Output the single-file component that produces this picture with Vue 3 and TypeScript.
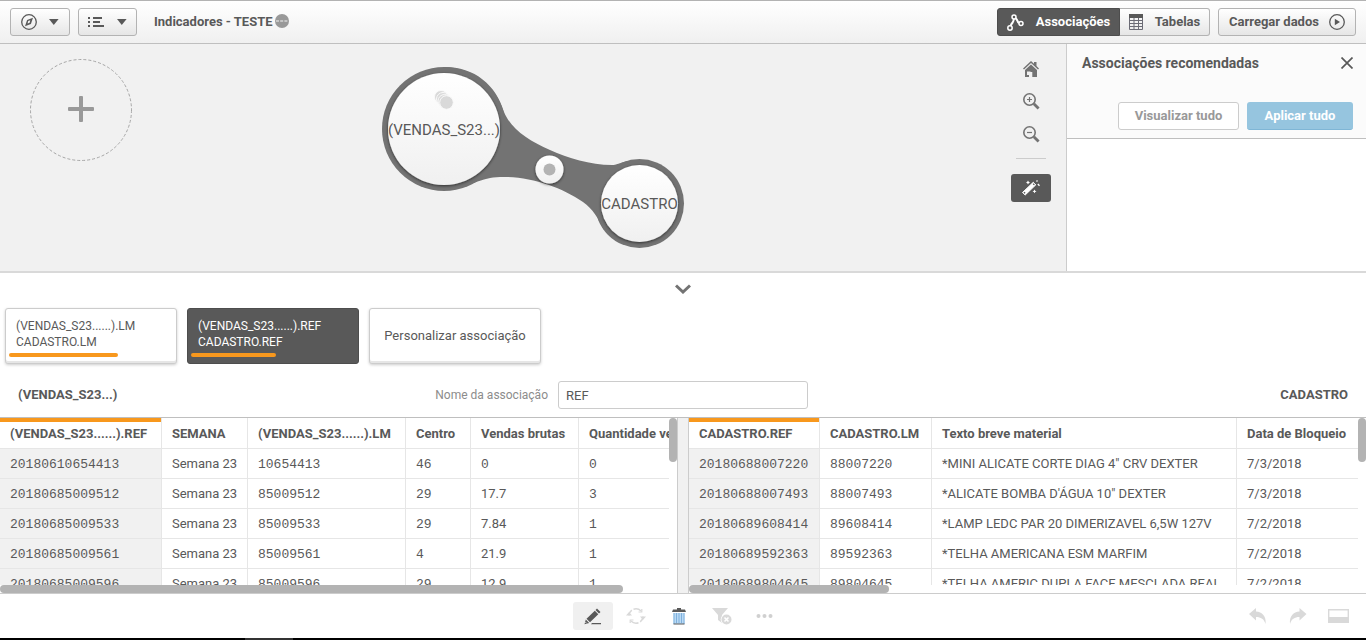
<script setup lang="ts">
import { ref } from 'vue'

interface Column { title: string; width: number }
interface Pane { id: string; columns: Column[]; rows: string[][]; thumb: number }
interface Association { left: string; right: string; score: number; active: boolean }

const associationName = ref('REF')

const associations: Association[] = [
  { left: '(VENDAS_S23......).LM', right: 'CADASTRO.LM', score: 64, active: false },
  { left: '(VENDAS_S23......).REF', right: 'CADASTRO.REF', score: 50, active: true },
]

const panes: Pane[] = [
  {
    id: 'vendas',
    thumb: 92,
    columns: [
      { title: '(VENDAS_S23......).REF', width: 162 },
      { title: 'SEMANA', width: 86 },
      { title: '(VENDAS_S23......).LM', width: 158 },
      { title: 'Centro', width: 65 },
      { title: 'Vendas brutas', width: 108 },
      { title: 'Quantidade vendida', width: 150 },
    ],
    rows: [
      ['20180610654413', 'Semana 23', '10654413', '46', '0', '0'],
      ['20180685009512', 'Semana 23', '85009512', '29', '17.7', '3'],
      ['20180685009533', 'Semana 23', '85009533', '29', '7.84', '1'],
      ['20180685009561', 'Semana 23', '85009561', '4', '21.9', '1'],
      ['20180685009596', 'Semana 23', '85009596', '29', '12.9', '1'],
    ],
  },
  {
    id: 'cadastro',
    thumb: 29.5,
    columns: [
      { title: 'CADASTRO.REF', width: 131 },
      { title: 'CADASTRO.LM', width: 112 },
      { title: 'Texto breve material', width: 305 },
      { title: 'Data de Bloqueio', width: 160 },
    ],
    rows: [
      ['20180688007220', '88007220', '*MINI ALICATE CORTE DIAG 4" CRV DEXTER', '7/3/2018'],
      ['20180688007493', '88007493', "*ALICATE BOMBA D'ÁGUA 10\" DEXTER", '7/3/2018'],
      ['20180689608414', '89608414', '*LAMP LEDC PAR 20 DIMERIZAVEL 6,5W 127V', '7/2/2018'],
      ['20180689592363', '89592363', '*TELHA AMERICANA ESM MARFIM', '7/2/2018'],
      ['20180689804645', '89804645', '*TELHA AMERIC DUPLA FACE MESCLADA REAL', '7/2/2018'],
    ],
  },
]

const tableWidth = (pane: Pane): number => pane.columns.reduce((sum, c) => sum + c.width, 0)
const isCode = (value: string): boolean => /^\d+$/.test(value)
</script>

<template>
  <div class="app">
    <header class="topbar">
      <button class="btn menu" aria-label="Navegação">
        <svg width="16" height="16" viewBox="0 0 16 16" fill="none">
          <circle cx="8" cy="8" r="7.3" stroke="#595959" stroke-width="1.3" />
          <path d="M12 3.800 9.900 9.900 4 12.200 6.100 6.100Z" fill="#595959" />
          <path d="M7.200 7 9.300 6.200 8.600 8.800 6.600 9.600Z" fill="#f4f4f4" />
        </svg>
        <svg width="10" height="6" viewBox="0 0 10 6"><path d="M0 0H9.6L4.8 6Z" fill="#595959" /></svg>
      </button>
      <button class="btn menu list" aria-label="Menu">
        <svg width="17" height="12" viewBox="0 0 17 12" fill="#595959">
          <path d="M0 1h2v2H0zM5 1h9v2H5zM0 5h2v2H0zM5 5h7v2H5zM0 9h2v2H0zM5 9h11v2H5z" />
        </svg>
        <svg width="10" height="6" viewBox="0 0 10 6"><path d="M0 0H9.6L4.8 6Z" fill="#595959" /></svg>
      </button>
      <h1 class="title">Indicadores - TESTE</h1>
      <svg class="status" width="14" height="14" viewBox="0 0 14 14">
        <circle cx="7" cy="7" r="7" fill="#999" />
        <path d="M1 7H13" stroke="#f4f4f4" stroke-width="1.2" stroke-dasharray="3 1.2" />
      </svg>
      <div class="switch">
        <button class="btn on">
          <svg width="17" height="17" viewBox="0 0 17 17" fill="none" stroke="#fff" stroke-width="1.5">
            <circle cx="7" cy="3" r="2" /><circle cx="3" cy="14" r="2.2" /><circle cx="14" cy="9.5" r="2" />
            <path d="M6.8 5C6.6 9 5.3 7.8 3.6 11.8M8.6 4.2C11 6 10 8 12 9" stroke-width="2" />
          </svg>
          Associações
        </button>
        <button class="btn off">
          <svg width="14" height="16" viewBox="0 0 14 16" fill="none">
            <path d="M.5.5h13v15H.5zM5 4v11.5M9.500 4v11.5M.5 6.500h13M.5 9.500h13M.5 12.500h13" stroke="#6b6b75" />
            <path d="M0 0h14v4H0z" fill="#595959" />
          </svg>
          Tabelas
        </button>
      </div>
      <button class="btn load">
        Carregar dados
        <svg width="16" height="16" viewBox="0 0 16 16" fill="none">
          <circle cx="8" cy="8" r="7.3" stroke="#595959" stroke-width="1.3" />
          <path d="M5.8 4.8 11 8 5.8 11.2Z" fill="#595959" />
        </svg>
      </button>
    </header>

    <section class="upper">
      <div class="canvas">
        <button class="add" aria-label="Adicionar dados">
          <svg width="102" height="102" viewBox="0 0 102 102" fill="none">
            <circle cx="51" cy="51" r="50.5" stroke="#a6a6a6" stroke-dasharray="3 2" />
            <rect x="38" y="48" width="26" height="4" rx="1" fill="#999" />
            <rect x="49" y="37" width="4" height="26" rx="1" fill="#999" />
          </svg>
        </button>
        <svg class="graph" width="320" height="190" viewBox="374 60 320 190">
          <defs>
            <linearGradient id="bubble" x1="0" y1="0" x2="0" y2="1">
              <stop offset="0" stop-color="#fff" /><stop offset="1" stop-color="#f0f0f0" />
            </linearGradient>
            <filter id="drop" x="-20%" y="-20%" width="140%" height="140%">
              <feDropShadow dx="0" dy="1" stdDeviation="1.5" flood-color="#000" flood-opacity="0.6" />
            </filter>
          </defs>
          <g fill="#737373">
            <circle cx="444" cy="129" r="62" />
            <circle cx="639.5" cy="203.5" r="44.5" />
            <path d="M444 67C475 67 496 85 504 112C511 129 529 141 550 150C568 158 590 165 612 165C616 165 620 163 627 161L639 203L604 230C598 218 593 209 583 202C561 187 530 176 500 177C490 177.500 484 179 474 183L444 129Z" />
          </g>
          <g fill="url(#bubble)" filter="url(#drop)">
            <circle cx="444" cy="129" r="56" />
            <circle cx="639.500" cy="203.500" r="38.500" />
            <circle cx="549.500" cy="169.500" r="14" />
          </g>
          <circle cx="549.500" cy="169.500" r="6" fill="#b3b3b3" />
          <g fill="#d9d9d9" stroke="#fafafa">
            <circle cx="441" cy="97" r="6.500" /><circle cx="443" cy="99" r="6.500" />
            <circle cx="444.500" cy="101" r="6.500" /><circle cx="446.500" cy="102.500" r="6.800" />
          </g>
          <g class="node-label">
            <text x="444" y="135">(VENDAS_S23...)</text>
            <text x="639.500" y="209">CADASTRO</text>
          </g>
        </svg>
        <nav class="tools">
          <button aria-label="Início">
            <svg width="16" height="16" viewBox="0 0 16 16" fill="#737373">
              <path d="M8 0 11 2.800V1h2.500v4L16 7.500l-1 1L8 2 1 8.500l-1-1Z" />
              <path d="M8 3.600 14 9v7H9.300v-5H6v5H2V9Z" /><path d="M4 10.500h3.500V14H4z" fill="#f1f1f1" />
            </svg>
          </button>
          <button aria-label="Ampliar">
            <svg width="17" height="17" viewBox="0 0 17 17" fill="none" stroke="#737373">
              <circle cx="6.500" cy="6.500" r="5.700" stroke-width="1.600" /><path d="M10.800 10.800 15.600 15.600" stroke-width="2.800" />
              <path d="M4 6.500h5M6.500 4v5" stroke-width="1.200" />
            </svg>
          </button>
          <button aria-label="Reduzir">
            <svg width="17" height="17" viewBox="0 0 17 17" fill="none" stroke="#737373">
              <circle cx="6.500" cy="6.500" r="5.700" stroke-width="1.600" /><path d="M10.800 10.800 15.600 15.600" stroke-width="2.800" />
              <path d="M4 6.500h5" stroke-width="1.200" />
            </svg>
          </button>
          <hr />
          <button class="wand" aria-label="Associações recomendadas">
            <svg width="20" height="16" viewBox="0 0 20 16" fill="#fff">
              <path d="M1.500 12.500 12.300 2.300 14.800 4.800 4.200 15Z" stroke="#fff" stroke-width="1" stroke-linejoin="round" />
              <path d="M3 13.200l1-1M12.300 4.800l1-1" stroke="#595959" stroke-width="1.600" />
              <path d="M7 .5l.7 1.300L9 2.500l-1.300.7L7 4.500l-.7-1.300L5 2.500l1.300-.7ZM13.500 9.500l.7 1.200 1.300.7-1.300.7-.7 1.200-.7-1.200-1.300-.7 1.300-.7Z" />
              <path d="M15.500 1.500 16.500.5M16.800 4l1.700 1.700" stroke="#fff" stroke-width="1.300" />
            </svg>
          </button>
        </nav>
      </div>
      <aside class="panel">
        <div class="panel-head">
          <div class="panel-title">
            <h2>Associações recomendadas</h2>
            <button class="close" aria-label="Fechar">
              <svg width="12" height="12" viewBox="0 0 12 12"><path d="M.5.5l11 11M11.500.5l-11 11" stroke="#595959" stroke-width="1.700" /></svg>
            </button>
          </div>
          <div class="panel-actions">
            <button class="preview" disabled>Visualizar tudo</button>
            <button class="apply" disabled>Aplicar tudo</button>
          </div>
        </div>
      </aside>
    </section>

    <button class="collapse" aria-label="Recolher">
      <svg width="16" height="10" viewBox="0 0 16 10" fill="none"><path d="M1 1.500 8 8 15 1.500" stroke="#737373" stroke-width="3" /></svg>
    </button>

    <div class="cards">
      <button v-for="a in associations" :key="a.right" class="card" :class="{ active: a.active }">
        <span>{{ a.left }}</span>
        <span>{{ a.right }}</span>
        <i class="score" :style="{ width: a.score + '%' }"></i>
      </button>
      <button class="card custom">Personalizar associação</button>
    </div>

    <div class="naming">
      <div class="naming-side">
        <strong>(VENDAS_S23...)</strong>
        <label for="association-name">Nome da associação</label>
      </div>
      <input id="association-name" v-model="associationName" type="text" />
      <strong class="right">CADASTRO</strong>
    </div>

    <main class="preview-grid">
      <section v-for="pane in panes" :key="pane.id" class="pane">
        <div class="viewport">
          <table :style="{ width: tableWidth(pane) + 'px' }">
            <colgroup><col v-for="c in pane.columns" :key="c.title" :style="{ width: c.width + 'px' }" /></colgroup>
            <thead>
              <tr><th v-for="c in pane.columns" :key="c.title" scope="col">{{ c.title }}</th></tr>
            </thead>
            <tbody>
              <tr v-for="row in pane.rows" :key="row[0]">
                <td v-for="(cell, i) in row" :key="i" :class="{ code: isCode(cell) }">{{ cell }}</td>
              </tr>
            </tbody>
          </table>
        </div>
        <div class="vbar"><i></i></div>
        <div class="hbar"><i :style="{ width: pane.thumb + '%' }"></i></div>
      </section>
    </main>

    <footer class="actions">
      <div class="side"></div>
      <div class="middle">
        <button class="selected" aria-label="Editar">
          <svg width="18" height="17" viewBox="0 0 18 17" fill="#595959">
            <path d="M13 .5 16.500 4 15 5.500 11.500 2ZM10.800 2.800 14.300 6.200 6 14.200 2.500 10.800ZM1.800 11.600 5.200 15 .5 16.300Z" /><path d="M8 15h9v1.300H7z" />
            <path d="M1.500 14.200l1 1" stroke="#f0f0f0" />
          </svg>
        </button>
        <button aria-label="Atualizar" disabled>
          <svg width="20" height="18" viewBox="0 0 20 18" fill="none" stroke="#d9d9d9" stroke-width="1.500">
            <path d="M3 8.500A7 7 0 0 1 5.800 3.200M7.500 2.200A7.200 7.200 0 0 1 15 4M17 9.500A7 7 0 0 1 14.200 14.800M12.500 15.800A7.200 7.200 0 0 1 5 14" />
            <path d="M0 8.500h6L3 5ZM14 9.500h6L17 13Z" fill="#d9d9d9" stroke="none" />
            <path d="M15.800 5.500V2M15.800 5H12.500M4.200 12.500V16M4.200 13H7.500" stroke-width="1.200" />
          </svg>
        </button>
        <button aria-label="Excluir">
          <svg width="14" height="17" viewBox="0 0 14 17">
            <path d="M5 0h4v1.500h4L14 4H0L1 1.500h4Z" fill="#595959" />
            <path d="M1.500 5h11v11h-11z" fill="#b9daf5" /><path d="M2 5v11M4.500 5v10M7 5v10M9.500 5v10M12 5v11" stroke="#7fb0dc" />
            <path d="M1.500 16h11" stroke="#595959" />
          </svg>
        </button>
        <button aria-label="Limpar filtro" disabled>
          <svg width="20" height="17" viewBox="0 0 20 17">
            <path d="M0 0H16L10 7V15L6 12V7Z" fill="#d9d9d9" /><circle cx="14.500" cy="11.500" r="5.800" fill="#fff" />
            <circle cx="14.500" cy="11.500" r="5" fill="#d9d9d9" /><path d="M12.500 9.500l4 4M16.500 9.500l-4 4" stroke="#fff" stroke-width="1.600" />
          </svg>
        </button>
        <button aria-label="Mais" disabled>
          <svg width="18" height="4" viewBox="0 0 18 4" fill="#d0d0d0"><circle cx="2.500" cy="2" r="2" /><circle cx="8.500" cy="2" r="2" /><circle cx="14.500" cy="2" r="2" /></svg>
        </button>
      </div>
      <div class="side end">
        <button aria-label="Desfazer" disabled>
          <svg width="18" height="17" viewBox="0 0 18 17" fill="#d9d9d9"><path d="M0 6 7 0V3.500C13 4 17.500 8 16.500 16C15 11 12 9 7 9V12.500Z" /></svg>
        </button>
        <button aria-label="Refazer" disabled>
          <svg width="18" height="17" viewBox="0 0 18 17" fill="#d9d9d9"><path d="M17.500 6 10.500 0V3.500C4.500 4 0 8 1 16C2.500 11 5.500 9 10.500 9V12.500Z" /></svg>
        </button>
        <button aria-label="Painel">
          <svg width="21" height="14" viewBox="0 0 21 14" fill="none"><path d="M.7.7h19.600v12.600H.7z" stroke="#d9d9d9" stroke-width="1.400" /><path d="M0 8h21v6H0z" fill="#d9d9d9" /></svg>
        </button>
      </div>
    </footer>
    <div class="taskbar"><i></i></div>
  </div>
</template>

<style>
body { margin: 0; }
</style>

<style scoped>
* { box-sizing: border-box; }
.app {
  display: flex;
  flex-direction: column;
  height: 100vh;
  background: #fff;
  color: #595959;
  font: 13px/16px Roboto, "Liberation Sans", sans-serif;
}
button {
  padding: 0;
  border: 0;
  background: none;
  color: inherit;
  font: inherit;
  display: flex;
  align-items: center;
  justify-content: center;
}
svg { flex: none; display: block; }

.topbar {
  flex: none;
  display: flex;
  align-items: center;
  height: 44px;
  padding: 0 10px;
  border-top: 1px solid #b3b3b3;
  border-bottom: 1px solid #bfbfbf;
  background: linear-gradient(#fff, #f0f0f0);
}
.btn {
  height: 28px;
  border: 1px solid #b3b3b3;
  border-radius: 3px;
  background: linear-gradient(#fff, #e6e6e6);
  font-weight: 700;
}
.menu { gap: 12px; width: 60px; margin-right: 8px; }
.list { width: 59px; }
.title { margin: 0 2px 0 9px; font-size: 13px; font-weight: 700; }
.status { margin-bottom: 2px; }
.switch { display: flex; margin-left: auto; }
.on { width: 123px; gap: 12px; border-color: #4d4d4d; border-radius: 3px 0 0 3px; background: #595959; color: #fff; }
.off { width: 90px; gap: 12px; border-left: 0; border-radius: 0 3px 3px 0; }
.load { width: 138px; margin-left: 8px; gap: 10px; }

.upper { flex: none; display: flex; height: 229px; border-bottom: 2px solid #d9d9d9; }
.canvas { position: relative; flex: 1; background: #f1f1f1; overflow: hidden; }
.add { position: absolute; left: 30px; top: 15px; border-radius: 50%; }
.graph { position: absolute; left: 374px; top: 16px; }
.node-label { fill: #595959; font-size: 15px; text-anchor: middle; }
.tools { position: absolute; right: 15px; top: 8px; width: 40px; }
.tools button { width: 40px; height: 33px; }
.tools hr { width: 30px; height: 1px; margin: 7px auto 15px; border: 0; background: #ccc; }
.tools .wand { height: 28px; border-radius: 3px; background: #595959; }
.panel { width: 300px; border-left: 1px solid #ccc; }
.panel-head { height: 95px; padding: 10px 13px 0 15px; border-bottom: 1px solid #bfbfbf; background: #fbfbfb; }
.panel-title { display: flex; align-items: center; justify-content: space-between; }
.panel-title h2 { margin: 0; font-size: 14px; line-height: 18px; font-weight: 700; }
.panel-actions { display: flex; justify-content: flex-end; gap: 8px; margin-top: 30px; }
.panel-actions button { height: 28px; border-radius: 3px; font-weight: 700; }
.preview { width: 121px; border: 1px solid #ccc; background: #fff; color: #999; }
.apply { width: 106px; border-bottom: 1px solid #7fb6d6; background: #96c5df; color: #fff; }

.collapse { align-self: center; width: 40px; height: 31px; }
.cards { flex: none; display: flex; gap: 10px; padding: 4px 5px 0; }
.card {
  position: relative;
  flex-direction: column;
  align-items: flex-start;
  width: 172px;
  height: 56px;
  padding: 0 10px 4px;
  border: 1px solid #ccc;
  border-radius: 3px;
  background: #fff;
  box-shadow: inset 0 -2px #e6e6e6, 0 1px 3px rgba(0, 0, 0, 0.2);
  font-size: 12px;
}
.card.active { border-color: #4d4d4d; background: #595959; color: #fff; box-shadow: none; }
.card.custom { align-items: center; padding: 0; font-size: 13px; }
.score { position: absolute; left: 3px; bottom: 6px; height: 4px; border-radius: 2px; background: #f8981d; }

.naming { flex: none; display: grid; grid-template-columns: 1fr 250px 1fr; align-items: center; height: 53px; padding: 9px 18px 0; }
.naming-side { display: flex; justify-content: space-between; padding-right: 10px; }
.naming label { color: #8c8c8c; font-size: 12px; }
.naming input {
  width: 100%;
  height: 28px;
  padding: 0 7px;
  border: 1px solid #ccc;
  border-radius: 3px;
  background: #fff;
  color: #595959;
  font: inherit;
}
.right { text-align: right; }

.preview-grid {
  flex: 1;
  min-height: 0;
  display: grid;
  grid-template-columns: 1fr 1fr;
  column-gap: 12px;
  border-top: 1px solid #bfbfbf;
  border-bottom: 1px solid #ccc;
  background: #f1f1f1;
}
.pane {
  display: grid;
  grid-template: minmax(0, 1fr) 8px / minmax(0, 1fr) 8px;
  min-width: 0;
  min-height: 0;
  background: #fff;
  box-shadow: 0 0 0 1px #ccc;
  clip-path: inset(0 -1px);
}
.viewport { overflow: hidden; }
table { table-layout: fixed; border-collapse: separate; border-spacing: 0; }
th, td {
  height: 30px;
  padding: 0 10px;
  border-right: 1px solid #e6e6e6;
  border-bottom: 1px solid #e6e6e6;
  text-align: left;
  white-space: nowrap;
  overflow: hidden;
}
th { height: 31px; padding-top: 2px; font-weight: 700; }
th:first-child { box-shadow: inset 0 4px #f8981d; }
td:first-child { background: #f1f1f1; }
th:last-child, td:last-child { border-right: 0; }
.code { padding-top: 2px; font-family: "Liberation Mono", monospace; }
.vbar i { display: block; height: 44px; border-radius: 4px; background: #b3b3b3; }
.hbar { grid-column: 1 / 3; }
.hbar i { display: block; height: 8px; border-radius: 4px; background: #b3b3b3; }

.actions { flex: none; display: flex; align-items: center; height: 44px; }
.side { flex: 1; }
.middle { display: flex; gap: 3px; }
.middle button { width: 40px; height: 28px; border-radius: 3px; }
.selected { background: #f0f0f0; }
.end { display: flex; justify-content: flex-end; padding-right: 8px; }
.end button { width: 40px; height: 28px; }
.taskbar { flex: none; height: 2px; padding-left: 245px; background: #000; }
.taskbar i { display: block; width: 48px; height: 2px; background: #333; }
</style>
